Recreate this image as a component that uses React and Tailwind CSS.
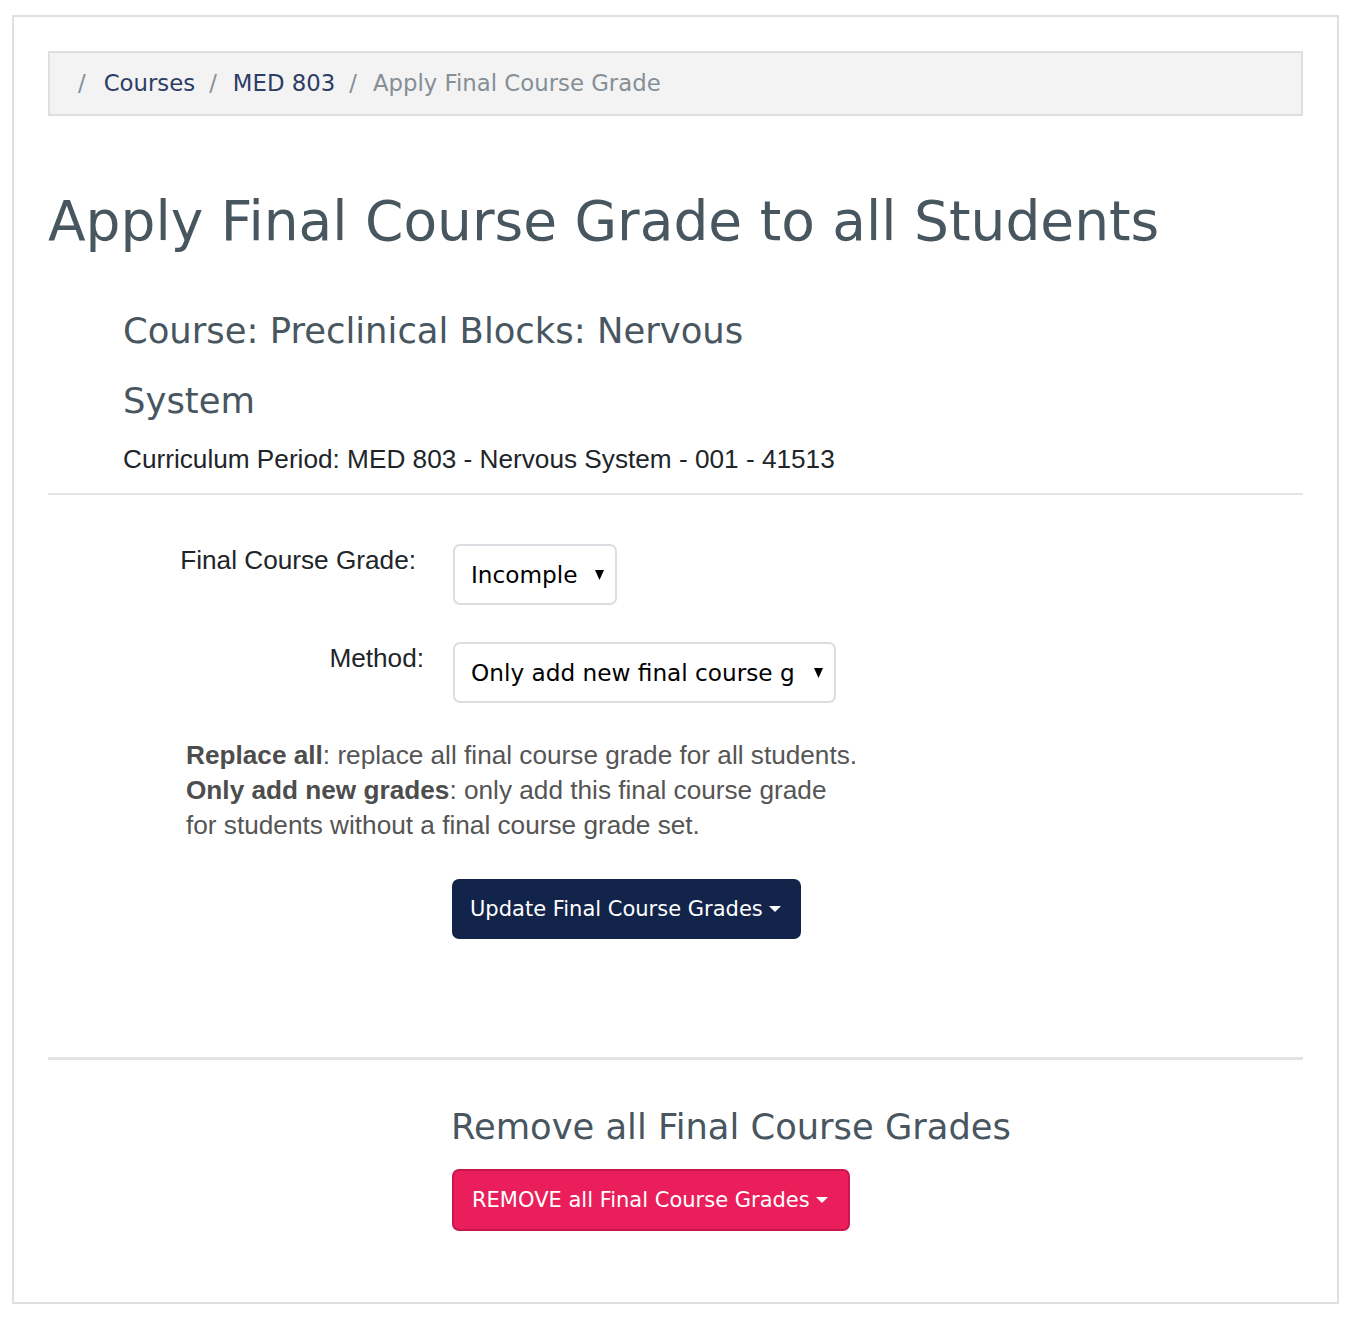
const sans = "font-['DejaVu_Sans','Verdana',sans-serif]"
const arial = "font-['Liberation_Sans','Arial',sans-serif]"

function Caret() {
  return (
    <span className="ml-[6px] inline-block w-0 h-0 border-x-[6px] border-x-transparent border-t-[6px] border-t-white align-middle" />
  )
}

function SelectBox({ value, width, textWidth }) {
  return (
    <div
      className={`relative h-[61px] border-2 border-[#dadde1] rounded-[7px] bg-white flex items-center pl-[16px] ${width}`}
    >
      <span className={`${sans} text-[23.2px] leading-[28px] text-black whitespace-nowrap overflow-hidden block shrink-0 ${textWidth}`}>
        {value}
      </span>
      <svg className="absolute right-[11px] top-[24px]" width="9" height="10" viewBox="0 0 9 10">
        <path d="M0 0 L9 0 L4.5 10 Z" fill="#000" />
      </svg>
    </div>
  )
}

export default function App() {
  return (
    <div className="min-h-screen bg-white pt-[15px] pl-[12px]">
      <div className="w-[1327px] h-[1289px] border-2 border-[#dde0e3] px-[34px] pt-[34px]">

        {/* Breadcrumb */}
        <nav className={`h-[65px] border-2 border-[#dde0e3] bg-[#f3f3f3] flex items-center pl-[28px] ${sans} text-[22.8px]`}>
          <span className="text-[#868e96] pr-[18px]">/</span>
          <span className="text-[#2c3d66]">Courses</span>
          <span className="text-[#868e96] pl-[14px] pr-[16px]">/</span>
          <span className="text-[#2c3d66]">MED 803</span>
          <span className="text-[#868e96] pl-[14px] pr-[16px]">/</span>
          <span className="text-[#868e96]">Apply Final Course Grade</span>
        </nav>

        <h1 className={`${sans} mt-[72px] text-[55px] leading-[66px] text-[#48565f]`}>
          Apply Final Course Grade to all Students
        </h1>

        {/* Course info */}
        <div className="pl-[75px] mt-[42px]">
          <h2 className={`${sans} text-[35.4px] leading-[70px] text-[#48565f] max-w-[700px]`}>
            Course: Preclinical Blocks: Nervous System
          </h2>
          <p className={`${arial} mt-[5px] text-[26.2px] leading-[36px] text-[#212529]`}>
            Curriculum Period: MED 803 - Nervous System - 001 - 41513
          </p>
        </div>

        <hr className="mt-[16px] border-0 border-t-2 border-[#e3e6e9]" />

        {/* Form */}
        <div className="mt-[49px] flex items-start">
          <label className={`${arial} w-[368px] text-right text-[26.2px] leading-[32px] text-[#212529]`}>
            Final Course Grade:
          </label>
          <div className="ml-[37px]">
            <SelectBox value="Incomplete" width="w-[164px]" textWidth="w-[106px]" />
          </div>
        </div>

        <div className="mt-[37px] flex items-start">
          <label className={`${arial} w-[376px] text-right text-[26.2px] leading-[32px] text-[#212529]`}>
            Method:
          </label>
          <div className="ml-[29px]">
            <SelectBox value="Only add new final course grades" width="w-[383px]" textWidth="w-[324px]" />
          </div>
        </div>

        <p className={`${arial} mt-[35px] pl-[138px] text-[26.2px] leading-[35px] text-[#555555]`}>
          <b className="text-[#4d4d4d]">Replace all</b>: replace all final course grade for all students.
          <br />
          <b className="text-[#4d4d4d]">Only add new grades</b>: only add this final course grade
          <br />
          for students without a final course grade set.
        </p>

        <div className="mt-[36px] pl-[404px]">
          <button className={`${sans} h-[60px] pl-[18px] pr-[20px] rounded-[7px] bg-[#13244b] text-white text-[21px] leading-[24px] flex items-center`}>
            Update Final Course Grades
            <Caret />
          </button>
        </div>

        <hr className="mt-[118px] border-0 border-t-[3px] border-[#e1e4e7]" />

        {/* Remove */}
        <div className="pl-[403px] mt-[46px]">
          <h3 className={`${sans} text-[35.3px] leading-[42px] text-[#48565f]`}>
            Remove all Final Course Grades
          </h3>
          <button className={`${sans} mt-[21px] h-[62px] pl-[18px] pr-[20px] rounded-[7px] bg-[#e91e5a] border-2 border-[#c9174c] text-white text-[21px] leading-[24px] flex items-center ml-px`}>
            REMOVE all Final Course Grades
            <Caret />
          </button>
        </div>

      </div>
    </div>
  )
}
